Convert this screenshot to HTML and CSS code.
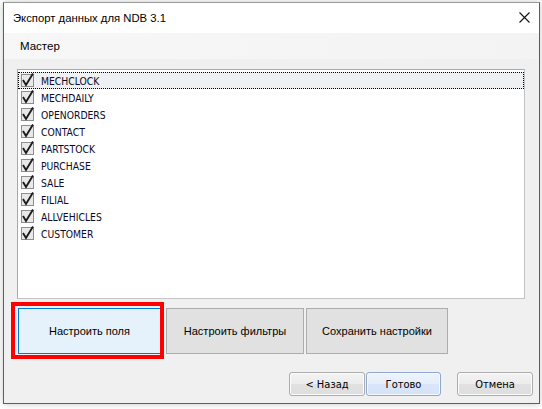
FILE: index.html
```html
<!DOCTYPE html>
<html lang="ru">
<head>
<meta charset="utf-8">
<title>Экспорт данных для NDB 3.1</title>
<link rel="stylesheet" href="styles.css">
</head>
<body>
<div class="window">
  <div class="titlebar">
    <span class="title">Экспорт данных для NDB 3.1</span>
    <svg class="close" width="11" height="11" viewBox="0 0 11 11"><path d="M0.5 0.5L10.5 10.5M10.5 0.5L0.5 10.5" stroke="#111" stroke-width="1.1" fill="none"/></svg>
  </div>
  <div class="header">Мастер</div>
  <div class="content">
    <div class="listbox">
      <div class="item focused"><svg class="cb" width="14" height="16" viewBox="0 0 14 16"><rect x="0.5" y="2.5" width="12" height="12" class="cbbox"/><polyline points="2,8 5,13 12,1.5" class="cbmark"/></svg><span>MECHCLOCK</span></div>
      <div class="item"><svg class="cb" width="14" height="16" viewBox="0 0 14 16"><rect x="0.5" y="2.5" width="12" height="12" class="cbbox"/><polyline points="2,8 5,13 12,1.5" class="cbmark"/></svg><span>MECHDAILY</span></div>
      <div class="item"><svg class="cb" width="14" height="16" viewBox="0 0 14 16"><rect x="0.5" y="2.5" width="12" height="12" class="cbbox"/><polyline points="2,8 5,13 12,1.5" class="cbmark"/></svg><span>OPENORDERS</span></div>
      <div class="item"><svg class="cb" width="14" height="16" viewBox="0 0 14 16"><rect x="0.5" y="2.5" width="12" height="12" class="cbbox"/><polyline points="2,8 5,13 12,1.5" class="cbmark"/></svg><span>CONTACT</span></div>
      <div class="item"><svg class="cb" width="14" height="16" viewBox="0 0 14 16"><rect x="0.5" y="2.5" width="12" height="12" class="cbbox"/><polyline points="2,8 5,13 12,1.5" class="cbmark"/></svg><span>PARTSTOCK</span></div>
      <div class="item"><svg class="cb" width="14" height="16" viewBox="0 0 14 16"><rect x="0.5" y="2.5" width="12" height="12" class="cbbox"/><polyline points="2,8 5,13 12,1.5" class="cbmark"/></svg><span>PURCHASE</span></div>
      <div class="item"><svg class="cb" width="14" height="16" viewBox="0 0 14 16"><rect x="0.5" y="2.5" width="12" height="12" class="cbbox"/><polyline points="2,8 5,13 12,1.5" class="cbmark"/></svg><span>SALE</span></div>
      <div class="item"><svg class="cb" width="14" height="16" viewBox="0 0 14 16"><rect x="0.5" y="2.5" width="12" height="12" class="cbbox"/><polyline points="2,8 5,13 12,1.5" class="cbmark"/></svg><span>FILIAL</span></div>
      <div class="item"><svg class="cb" width="14" height="16" viewBox="0 0 14 16"><rect x="0.5" y="2.5" width="12" height="12" class="cbbox"/><polyline points="2,8 5,13 12,1.5" class="cbmark"/></svg><span>ALLVEHICLES</span></div>
      <div class="item"><svg class="cb" width="14" height="16" viewBox="0 0 14 16"><rect x="0.5" y="2.5" width="12" height="12" class="cbbox"/><polyline points="2,8 5,13 12,1.5" class="cbmark"/></svg><span>CUSTOMER</span></div>
    </div>
    <div class="actions">
      <button class="big primary">Настроить поля</button>
      <button class="big second">Настроить фильтры</button>
      <button class="big third">Сохранить настройки</button>
      <div class="highlight"></div>
    </div>
    <div class="footer">
      <button class="nav">&lt; Назад</button>
      <button class="nav default">Готово</button>
      <button class="nav cancel">Отмена</button>
    </div>
  </div>
</div>
</body>
</html>
```
FILE: styles.css
```css
html, body {
  margin: 0;
  padding: 0;
  background: #ffffff;
}
body {
  width: 542px;
  height: 409px;
  overflow: hidden;
  font-family: "Liberation Sans", Arial, sans-serif;
}
.window {
  margin: 2px 0 0 3px;
  width: 537px;
  height: 402px;
  box-sizing: border-box;
  border: 1px solid #5e5e5e;
  border-top-color: #9a9a9a;
  background: #f0f0f0;
  display: flex;
  flex-direction: column;
  box-shadow: 0 0 7px rgba(0, 0, 0, 0.22);
}
.titlebar {
  height: 30px;
  background: #ffffff;
  display: flex;
  align-items: center;
  justify-content: space-between;
  padding: 0 9px 0 9px;
}
.title {
  font-size: 11.3px;
  color: #000;
  padding-bottom: 1px;
}
.close {
  display: block;
  margin-bottom: 1px;
}
.header {
  height: 26px;
  box-sizing: border-box;
  padding-left: 16px;
  display: flex;
  align-items: center;
  font-size: 11.5px;
  color: #000;
  background: linear-gradient(to right, #f7f7f7, #f3f3f3);
}
.content {
  flex: 1;
  padding: 10px 0 0 13px;
  display: flex;
  flex-direction: column;
}
.listbox {
  width: 508px;
  height: 230px;
  box-sizing: border-box;
  border: 1px solid #a9a9a9;
  border-right-color: #c4c4c4;
  border-bottom-color: #c4c4c4;
  background: #ffffff;
  padding-top: 2px;
}
.item {
  height: 17px;
  box-sizing: border-box;
  display: flex;
  align-items: center;
  font-family: "DejaVu Sans Condensed", "DejaVu Sans", sans-serif;
  font-stretch: semi-condensed;
  font-size: 10.3px;
  color: #0a0a2a;
  position: relative;
}
.item span {
  margin-left: 6px;
}
.item.focused {
  background: #eff0f2;
  border: 1px dotted #000;
}
.cb {
  display: block;
  margin-left: 3px;
  margin-top: -2px;
  flex: none;
}
.item.focused .cb {
  margin-left: 2px;
}
.item.focused span {
  margin-left: 6px;
}
.cbbox {
  fill: #e9e9e9;
  stroke: #8d8e90;
  stroke-width: 1;
}
.cbmark {
  fill: none;
  stroke: #1c1c1c;
  stroke-width: 1.9;
  stroke-linejoin: miter;
}
.actions {
  position: relative;
  display: flex;
  margin: 9px 0 0 1px;
}
.big {
  height: 46px;
  font-family: "Liberation Sans", Arial, sans-serif;
  font-size: 11px;
  color: #000;
  background: #e1e1e1;
  border: 1px solid #adadad;
  padding: 0;
  margin: 0;
}
.big.primary {
  width: 143px;
  background: #e5f1fb;
  border-color: #0078d7;
}
.big.second {
  width: 138px;
  margin-left: 5px;
}
.big.third {
  width: 142px;
  margin-left: 2px;
}
.highlight {
  position: absolute;
  left: -7px;
  top: -6px;
  width: 153px;
  height: 57px;
  box-sizing: border-box;
  border: 4px solid #ff0000;
  pointer-events: none;
}
.footer {
  display: flex;
  justify-content: flex-end;
  margin-top: 18px;
  padding-right: 6px;
}
.nav {
  width: 76px;
  height: 24px;
  padding: 0;
  margin: 0;
  border: 1px solid #acacac;
  border-radius: 3px;
  background: linear-gradient(#f3f3f3 0%, #ececec 50%, #e1e1e1 51%, #dedede 100%);
  box-shadow: inset 0 0 0 1px #fcfcfc;
  font-family: "DejaVu Sans Condensed", "DejaVu Sans", sans-serif;
  font-stretch: semi-condensed;
  font-size: 11px;
  color: #000;
}
.nav.default {
  width: 75px;
  margin-left: 1px;
  border-color: #8fa8cc;
  background: linear-gradient(#eef4fd 0%, #e4edfb 50%, #d9e5f8 51%, #d6e2f6 100%);
  box-shadow: inset 0 0 0 1px #f4f8ff;
}
.nav.cancel {
  margin-left: 16px;
}
```
